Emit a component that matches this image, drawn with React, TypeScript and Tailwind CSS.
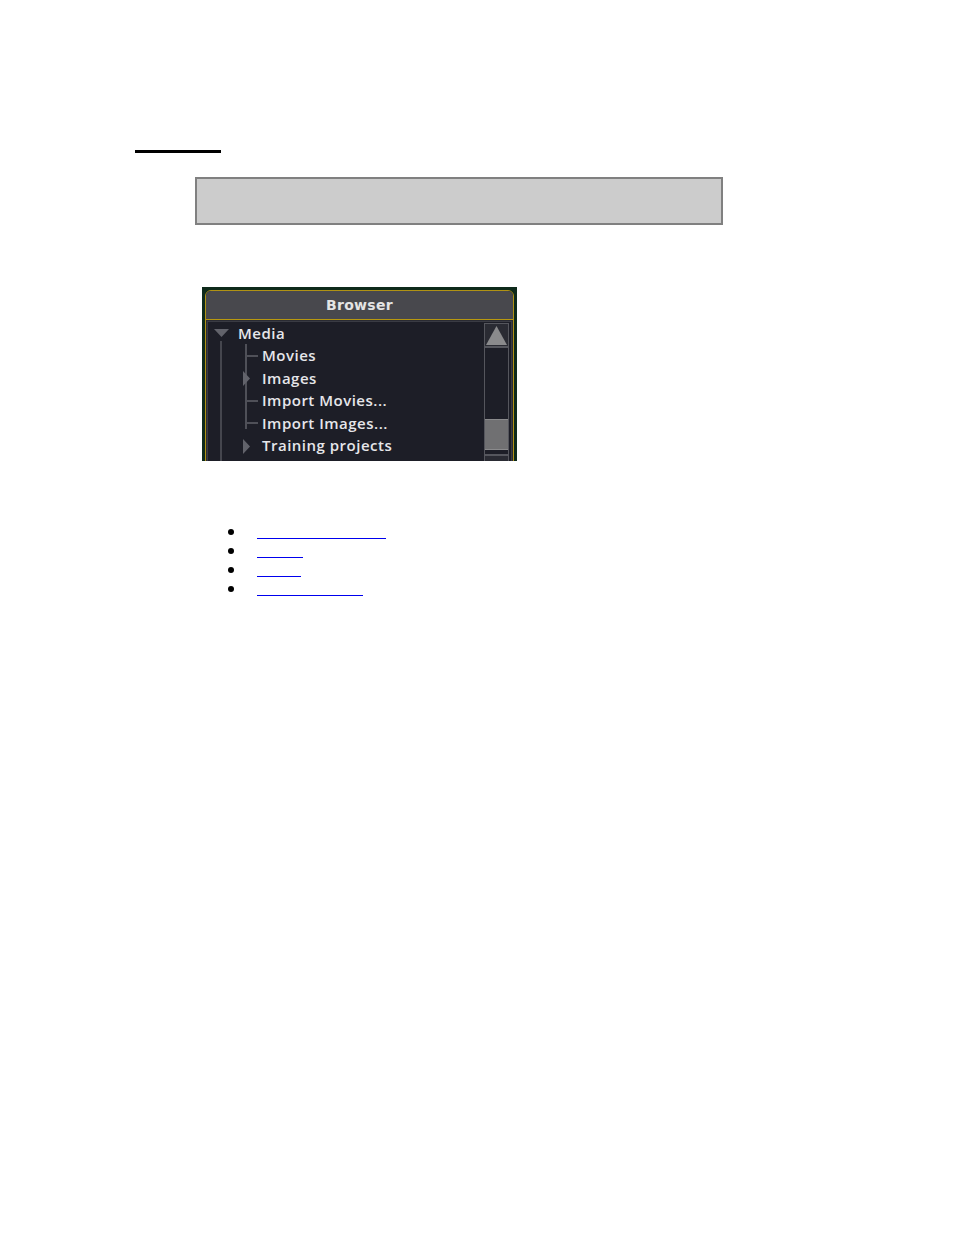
import React from "react";

const font = { fontFamily: '"Open Sans", "DejaVu Sans", sans-serif' };

function Row({ label, kind, indent }: { label: string; kind: "down" | "right" | "tick"; indent: number }) {
  return (
    <div className="relative h-[22.5px] shrink-0 flex items-center" style={{ paddingLeft: indent }}>
      <span className="text-[15px] font-semibold text-[#e6e6ea] tracking-[0.5px] leading-none whitespace-nowrap">{label}</span>
      {kind === "down" && (
        <svg className="absolute left-[6px] top-[7px]" width="15" height="9" viewBox="0 0 15 9">
          <polygon points="0,0 15,0 7.5,8" fill="#62636b" />
        </svg>
      )}
      {kind === "right" && (
        <svg className="absolute left-[35px] top-[4px]" width="8" height="15" viewBox="0 0 8 15">
          <polygon points="0,0 7,7.5 0,15" fill="#62636b" />
        </svg>
      )}
      {kind === "tick" && <div className="absolute left-[38px] top-[10px] w-[12px] h-[2px] bg-[#4f5058]" />}
    </div>
  );
}

export default function App() {
  return (
    <div className="min-h-[1235px] w-[954px] bg-white" style={font}>
      <div className="pt-[150px]">
        <div className="ml-[135px] w-[86px] h-[3px] bg-black" />
        <div className="ml-[195px] mt-[24px] w-[528px] h-[48px] bg-[#cccccc] border-2 border-[#808080]" />
        <div className="ml-[202px] mt-[62px] w-[315px] h-[174px] bg-[#0e2a1b] pt-[3px] px-[3px] overflow-hidden">
          <div className="border border-[#b09214] rounded-t-[6px] bg-[#1d1e27] h-[200px] flex flex-col">
            <div className="h-[29px] shrink-0 bg-[#48484d] rounded-t-[5px] flex items-center justify-center border-b border-[#b8980f]">
              <span className="text-[14px] font-bold text-[#e4e4e4] tracking-[0.3px]" style={{ fontFamily: '"DejaVu Sans", sans-serif' }}>Browser</span>
            </div>
            <div className="flex-1 min-h-0 p-[1px] pt-[1px] bg-[#2a2b33]">
              <div className="h-full flex bg-[#1d1e27] border border-[#3a3b43]">
                <div className="relative flex-1 flex flex-col">
                  <div className="absolute left-[12px] top-[19px] w-[2px] h-[200px] bg-[#45464e]" />
                  <div className="absolute left-[37px] top-[22px] w-[2px] h-[85px] bg-[#4f5058]" />
                  <Row label="Media" kind="down" indent={30} />
                  <Row label="Movies" kind="tick" indent={54} />
                  <Row label="Images" kind="right" indent={54} />
                  <Row label="Import Movies..." kind="tick" indent={54} />
                  <Row label="Import Images..." kind="tick" indent={54} />
                  <Row label="Training projects" kind="right" indent={54} />
                </div>
                <div className="w-[25px] mt-[1px] mr-[2px] border border-[#55565d] flex flex-col h-[200px] bg-[#1d1e27]">
                  <div className="h-[22px] shrink-0 flex items-center justify-center bg-[#2a2b33]">
                    <svg width="21" height="19" viewBox="0 0 21 19">
                      <polygon points="10.5,0 21,19 0,19" fill="#8a8a8c" />
                    </svg>
                  </div>
                  <div className="h-[2px] shrink-0 bg-[#55565d]" />
                  <div className="h-[71px] shrink-0" />
                  <div className="h-[31px] shrink-0 bg-[#707072] border-y border-[#8a8a8c]" />
                  <div className="h-[4px] shrink-0" />
                  <div className="h-[2px] shrink-0 bg-[#55565d]" />
                  <div className="h-[22px] shrink-0 bg-[#2a2b33]" />
                </div>
              </div>
            </div>
          </div>
        </div>
        <ul className="mt-[62px] ml-[228px]">
          {[129, 46, 44, 106].map((w, i) => (
            <li key={i} className="h-[19px] flex">
              <span className="w-[6px] h-[6px] rounded-full bg-black mt-[6px]" />
              <a href="#" className="ml-[23px] block h-[16px] border-b border-[#0000ee]" style={{ width: w }} />
            </li>
          ))}
        </ul>
      </div>
    </div>
  );
}
